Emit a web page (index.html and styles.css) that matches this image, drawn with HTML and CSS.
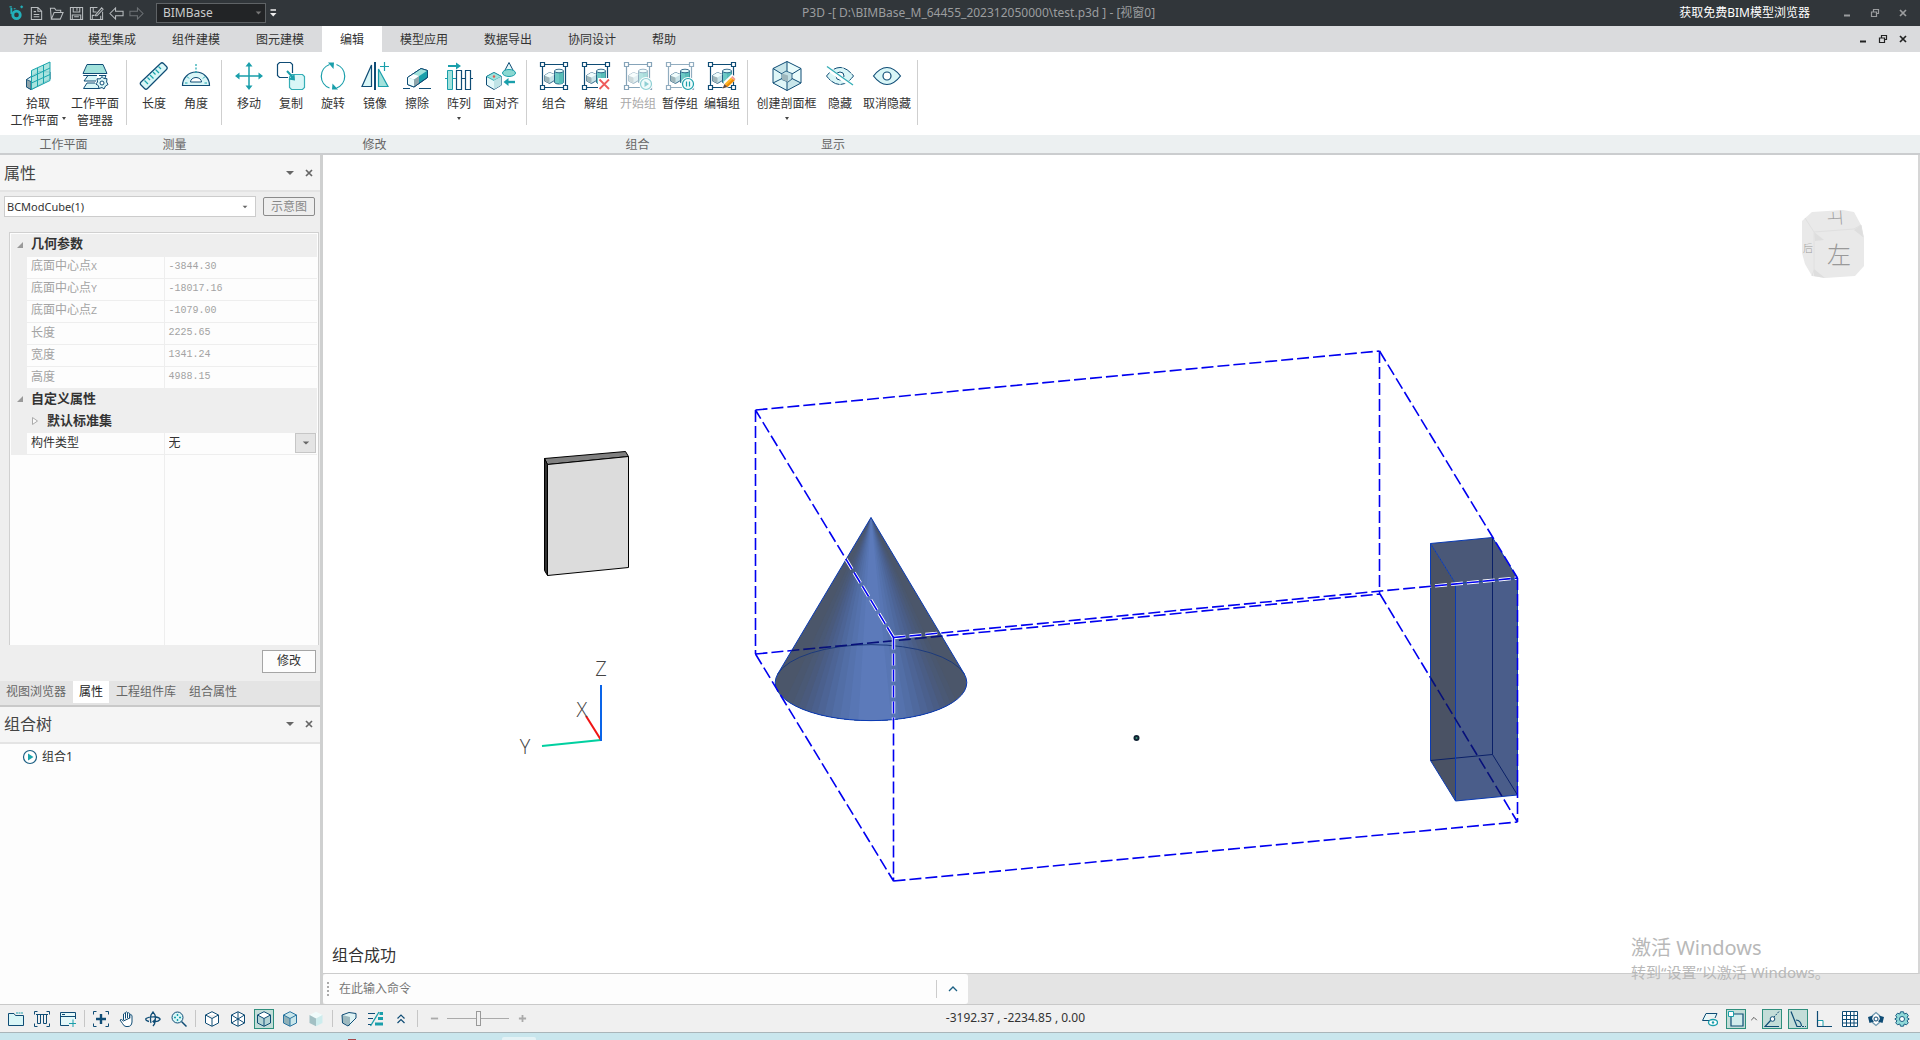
FILE: index.html
```html
<!DOCTYPE html>
<html lang="zh-CN">
<head>
<meta charset="utf-8">
<title>P3D - BIMBase</title>
<link rel="stylesheet" href="styles.css">
</head>
<body>
<svg class="defs" aria-hidden="true">
  <defs>
    <symbol id="i-frame" viewBox="0 0 32 32">
      <path d="M6 4.500H26M6 27.500H26M4.500 6V26M27.500 6V26" stroke="#0f4c75" stroke-width="1.200" fill="none"/>
      <g fill="#fff" stroke="#0f4c75" stroke-width="1.200"><path d="M2.500 2.500h4v4h-4zM25.500 2.500h4v4h-4zM2.500 25.500h4v4h-4zM25.500 25.500h4v4h-4z"/></g>
    </symbol>
    <symbol id="i-solids" viewBox="0 0 32 32">
      <path d="M16.500 11V22.500C18 24.500 24 24.500 25.500 22.500V11Z" fill="#6cc9c5" stroke="#0f4c75" stroke-width=".8"/>
      <path d="M21 11H25.500V22.500C24.500 23.800 22.500 24 21 24Z" fill="#58bdb8"/>
      <ellipse cx="21" cy="11" rx="4.500" ry="1.800" fill="#e4fbfb" stroke="#0f4c75" stroke-width=".8"/>
      <path d="M6.500 15.500 11.500 12.500 16.500 14.500V20.500L11.500 23.500 6.500 21Z" fill="#c8e3e8" stroke="#0f4c75" stroke-width=".8"/>
      <path d="M6.500 15.500 11.500 17.500V23.500L6.500 21Z" fill="#9fb6bb"/>
      <path d="M6.500 15.500 11.500 12.500 16.500 14.500 11.500 17.500Z" fill="#f0fcfc"/>
    </symbol>
    <symbol id="i-min" viewBox="0 0 10 10"><path d="M2 7.500H8" stroke="currentColor" stroke-width="2"/></symbol>
    <symbol id="i-restore" viewBox="0 0 10 10"><path d="M3.500 3.500V1.500H8.500V5.500H6.500M1.500 4H6.500V8.500H1.500Z" stroke="currentColor" stroke-width="1.200" fill="none"/></symbol>
    <symbol id="i-close" viewBox="0 0 10 10"><path d="M2 2 8 8M8 2 2 8" stroke="currentColor" stroke-width="1.700" fill="none"/></symbol>
    <symbol id="i-down" viewBox="0 0 10 10"><path d="M1 3H9L5 7Z" fill="currentColor"/></symbol>
  </defs>
</svg>

<header class="titlebar">
  <nav class="quick" aria-label="快速访问">
    <button aria-label="应用"><svg viewBox="0 0 16 16"><circle cx="8" cy="10" r="4" fill="none" stroke="#23b0ba" stroke-width="3"/><path d="M2.500 2.500V9" stroke="#23b0ba" stroke-width="2"/><path d="M.5 1.500H3M12 1.500h3M13.500 0v3M5 3.500H7" stroke="#23b0ba" stroke-width="1.200"/></svg></button>
    <button aria-label="新建"><svg viewBox="0 0 16 16"><path d="M2.500 1.500H9.500L13.500 5.500V14.500H2.500ZM9.500 1.500V5.500H13.500M5 6H7.500M5 9H11M5 11.500H11"/></svg></button>
    <button aria-label="打开"><svg viewBox="0 0 16 16"><path d="M2.500 14 1.500 2.500H6L7.500 4.500H12.500V7M2.500 14 5.500 7H15L12 14Z"/></svg></button>
    <button aria-label="保存"><svg viewBox="0 0 16 16"><path d="M1.500 1.500H14.500V14.500H1.500ZM4.500 1.500V6.500H11.500V1.500M8.500 2V5M3.500 14.500V9.500H12.500V14.500M5.500 11.500H10.500"/></svg></button>
    <button aria-label="另存为"><svg viewBox="0 0 16 16"><path d="M14.500 6V14.500H1.500V1.500H9M4.500 1.500V6.500H8M3.500 14.500V10H6M12.500 14.500V10.500M7 9.500 13.500 2 15 3.500 8.500 10.500H7Z"/></svg></button>
    <button aria-label="撤销"><svg viewBox="0 0 16 16"><path d="M1 8 7 2V5.500H15V10.500H7V14Z"/></svg></button>
    <button aria-label="重做" class="off"><svg viewBox="0 0 16 16"><path d="M15 8 9 2V5.500H1V10.500H9V14Z"/></svg></button>
  </nav>
  <div class="workspace">
    <select aria-label="工作空间"><option>BIMBase</option></select>
    <svg viewBox="0 0 10 10"><use href="#i-down"/></svg>
  </div>
  <button class="more" aria-label="自定义"><svg viewBox="0 0 10 10"><path d="M2.500 2H8" stroke="#eee" stroke-width="1.500"/><path d="M2 5H8.500L5.200 8.500Z" fill="#eee"/></svg></button>
  <h1>P3D -[ D:\BIMBase_M_64455_202312050000\test.p3d ] - [视窗0]</h1>
  <a class="promo" href="#">获取免费BIM模型浏览器</a>
  <div class="winbtns">
    <button aria-label="最小化"><svg><use href="#i-min"/></svg></button>
    <button aria-label="还原"><svg><use href="#i-restore"/></svg></button>
    <button aria-label="关闭"><svg><use href="#i-close"/></svg></button>
  </div>
</header>

<nav class="tabs">
  <button class="first">开始</button><button>模型集成</button><button>组件建模</button><button>图元建模</button><button class="on">编辑</button><button>模型应用</button><button>数据导出</button><button>协同设计</button><button>帮助</button>
  <div class="winbtns docbtns">
    <button aria-label="最小化视窗"><svg><use href="#i-min"/></svg></button>
    <button aria-label="还原视窗"><svg><use href="#i-restore"/></svg></button>
    <button aria-label="关闭视窗"><svg><use href="#i-close"/></svg></button>
  </div>
</nav>

<section class="ribbon" aria-label="编辑">
  <div class="group">
    <div class="tools wide">
      <button class="w64"><svg class="ic" viewBox="0 0 32 32"><path d="M4.500 19.500 17 11.500 28 12V19L9 29.500 4.500 27Z" fill="#dff5f6" stroke="#0f4c75"/><path d="M4.500 19.500 9 21.500V29.500L4.500 27Z" fill="#8fa5ab" stroke="#0f4c75" stroke-width=".8"/><path d="M9.500 10.500 28 2V20.500L9.500 29.500Z" fill="#9fe0da" fill-opacity=".85" stroke="#1aa5ad"/><path d="M15.500 8V26.500M21.500 5V23.500M9.500 17 28 8M9.500 23 28 14.500" stroke="#1aa5ad" fill="none"/></svg><span>拾取<br>工作平面<i class="tri"></i></span></button>
      <button class="w50"><svg class="ic" viewBox="0 0 32 32"><path d="M8 4.500H24L28 13.500H4Z" fill="#a2e2dc" stroke="#0f4c75"/><path d="M18 15.500H4.500L9 15.500 5 21H17M16 23H8L4.500 28.500H20M20 15.500H27L26 18" stroke="#0f4c75" fill="#d9f6f7"/><path d="M23 16.500 24.700 18.500 28 18.700 27.600 22 29 24.500 26.500 26 25 29 23 27.500 20 28.500 19.300 25.600 16.800 24 18.500 22 18 18.800 21.300 18.800Z" fill="#d9f6f7" stroke="#0f4c75"/><circle cx="23" cy="23" r="2" fill="#fff" stroke="#0f4c75"/></svg><span>工作平面<br>管理器</span></button>
    </div>
    <h2>工作平面</h2>
  </div>
  <div class="group">
    <div class="tools">
      <button><svg class="ic" viewBox="0 0 32 32"><path d="M22.500 3.500Q24 2 25.500 3.500L28.500 6.500Q30 8 28.500 9.500L9.500 28.500Q8 30 6.500 28.500L3 25Q1.500 23.500 3 22Z" fill="#d9f6f7" stroke="#0f4c75" stroke-width="1.200"/><path d="M6.500 20.500 10 24M9.500 17.500 12 20M12 15 15.500 18.500M15 12 17.500 14.500M17.500 9.500 21 13M20.500 6.500 23 9" stroke="#1aa5ad" stroke-width="1.200"/></svg><span>长度</span></button>
      <button><svg class="ic" viewBox="0 0 32 32"><path d="M2.500 25.500A13.500 13.500 0 0 1 29.500 25.500Z" fill="#d9f6f7" stroke="#0f4c75" stroke-width="1.200"/><path d="M10.500 22A5.500 4.500 0 0 1 21.500 22Z" fill="#fff" stroke="#0f4c75"/><path d="M16 4V14" stroke="#1aa5ad" stroke-width="1.200" stroke-dasharray="2 1.500"/><path d="M5 23H7.500M24.500 23H27M7 16.500 9 18.500M25 16.500 23 18.500" stroke="#1aa5ad"/></svg><span>角度</span></button>
    </div>
    <h2>测量</h2>
  </div>
  <div class="group">
    <div class="tools">
      <button><svg class="ic" viewBox="0 0 32 32"><path d="M16 4V28M4 16H28" stroke="#1a9fab" stroke-width="1.500"/><path d="M16 2 19.500 6.500H12.500ZM16 30 19.500 25.500H12.500ZM2 16 6.500 12.500V19.500ZM30 16 25.500 12.500V19.500Z" fill="#1a9fab"/></svg><span>移动</span></button>
      <button><svg class="ic" viewBox="0 0 32 32"><path d="M13 17.500H4.500L2.500 15.500V4.500L4.500 2.500H15.500L17.500 4.500V13" fill="#fff" stroke="#0f4c75" stroke-width="1.200"/><path d="M17 14.500H27.500L29.500 16.500V27.500L27.500 29.500H16.500L14.500 27.500V17Z" fill="#d9f6f7" stroke="#35aeb6" stroke-width="1.200"/><path d="M12 11 18 17.500" stroke="#1a9fab" stroke-width="2"/><path d="M20 20.500 19.500 14 13.500 19.500Z" fill="#1a9fab"/></svg><span>复制</span></button>
      <button><svg class="ic" viewBox="0 0 32 32"><path d="M12.500 28A12.500 12.500 0 0 1 12.500 4.500M19.500 4.500A12.500 12.500 0 0 1 19.500 28" fill="none" stroke="#1a9fab" stroke-width="1.200"/><path d="M11 2.500H17L16.500 9ZM21 29.500H15L15.500 23.500Z" fill="#1a9fab"/></svg><span>旋转</span></button>
      <button><svg class="ic" viewBox="0 0 32 32"><path d="M12.500 5V26.500H3Z" fill="#d9f6f7" stroke="#0f4c75" stroke-width="1.200"/><path d="M16 2V30" stroke="#0f4c75" stroke-width="2"/><path d="M19.500 9V26.500H29Z" fill="#a2e2dc" stroke="#1a9fab" stroke-width="1.200"/><path d="M25.500 2V11M21 6.500H30" stroke="#1a9fab" stroke-width="1.200"/></svg><span>镜像</span></button>
      <button><svg class="ic" viewBox="0 0 32 32"><path d="M6.500 17.500 20 8.500 26.500 10.500V17.500L13 27 6.500 24.500Z" fill="#1a9fab" stroke="#0f4c75"/><path d="M6.500 17.500 20 8.500 26.500 10.500 13 19.500Z" fill="#a2e2dc"/><path d="M6.500 17.500 13 19.500V27L6.500 24.500Z" fill="#eefcfc"/><path d="M13 19.500 18 16V23.500L13 27Z" fill="#8fa5ab"/><path d="M6.500 17.500 11.500 14 18 16 13 19.500Z" fill="#fff"/><path d="M6.500 17.500 20 8.500 26.500 10.500V17.500L13 27 6.500 24.500Z" fill="none" stroke="#0f4c75"/><path d="M2 28.500H9M18 28.500H30" stroke="#0f4c75" stroke-width="1.200"/></svg><span>擦除</span></button>
      <button><svg class="ic" viewBox="0 0 32 32"><path d="M5 6H14" stroke="#1a9fab" stroke-width="2"/><path d="M13 2.500 18 6 13 9.500Z" fill="#1a9fab"/><path d="M4.500 10.500H9.500V29.500H4.500Z" fill="#a2e2dc" stroke="#1a9fab"/><path d="M2 18.500H4.500M9.500 18.500H13.500" stroke="#1a9fab"/><path d="M13.500 10.500H18.500V29.500H13.500ZM22.500 10.500H27.500V29.500H22.500ZM18.500 18.500H22.500M27.500 18.500H30" fill="none" stroke="#0f4c75" stroke-width="1.200"/></svg><span>阵列</span><i class="tri below"></i></button>
      <button><svg class="ic" viewBox="0 0 32 32"><path d="M1.500 16.500 9 12.500 16.500 16.500V25L9 29.500 1.500 25Z" fill="#e4f8f9" stroke="#0f4c75"/><path d="M1.500 16.500 9 12.500 16.500 16.500 9 20.500Z" fill="#a2e2dc" stroke="#1a9fab" stroke-width=".8"/><path d="M9 20.500 16.500 16.500V25L9 29.500Z" fill="#bfe3e6"/><circle cx="9" cy="16.500" r="1.200" fill="#e05a4e"/><path d="M24 2.500 19 12H29Z" fill="#e4f8f9" stroke="#0f4c75"/><ellipse cx="24" cy="13" rx="6.500" ry="3.500" fill="#8ad8d1" stroke="#1a9fab"/><path d="M30 22H22" stroke="#1a9fab" stroke-width="2.400"/><path d="M18.500 22 23.500 18V26Z" fill="#1a9fab"/></svg><span>面对齐</span></button>
    </div>
    <h2>修改</h2>
  </div>
  <div class="group">
    <div class="tools">
      <button><svg class="ic" viewBox="0 0 32 32"><use href="#i-frame"/><use href="#i-solids"/></svg><span>组合</span></button>
      <button><svg class="ic" viewBox="0 0 32 32"><use href="#i-frame"/><use href="#i-solids"/><path d="M18 18H32V32H18Z" fill="#fff"/><path d="M19.500 19.500 29 29M29 19.500 19.500 29" stroke="#ee5c5c" stroke-width="1.800"/></svg><span>解组</span></button>
      <button disabled><svg class="ic" viewBox="0 0 32 32"><g opacity=".5"><use href="#i-frame"/><use href="#i-solids"/></g><circle cx="24" cy="24" r="7" fill="#fff"/><circle cx="24" cy="24" r="5.500" fill="#f0fbfb" stroke="#8fcfd4" stroke-width="1.200"/><path d="M22.500 21V27L27 24Z" fill="#8fcfd4"/></svg><span>开始组</span></button>
      <button><svg class="ic" viewBox="0 0 32 32"><use href="#i-frame" opacity=".45"/><use href="#i-solids"/><circle cx="24" cy="24" r="7" fill="#fff"/><circle cx="24" cy="24" r="5.500" fill="#f0fbfb" stroke="#1a9fab" stroke-width="1.200"/><path d="M22.500 21.500V26.500M25.500 21.500V26.500" stroke="#1a9fab" stroke-width="1.200"/></svg><span>暂停组</span></button>
      <button><svg class="ic" viewBox="0 0 32 32"><use href="#i-frame"/><use href="#i-solids"/><path d="M16 30 18 21.500 26 14 30.500 18 23 27Z" fill="#fff"/><path d="M18.500 24 25 17.500 28.500 20.500 21.500 27Z" fill="#ffb629"/><path d="M20 25.500 27 19 28.500 20.500 21.500 27Z" fill="#f08c00"/><path d="M25 17.500 26.500 16 29.500 19 28.500 20.500Z" fill="#f29a8f"/><path d="M18.500 24 21.500 27 16.500 28.500Z" fill="#6b4a3a"/></svg><span>编辑组</span></button>
    </div>
    <h2>组合</h2>
  </div>
  <div class="group">
    <div class="tools">
      <button class="w65"><svg class="ic" viewBox="0 0 32 32"><path d="M16 1.500 30 8.500V23L16 30.500 2 23V8.500Z" fill="#c9e6ea"/><path d="M16 1.500 30 8.500V23L16 16Z" fill="#e9fbfb"/><path d="M2 8.500V23L16 30.500V16Z" fill="#dff6f7"/><path d="M16 1.500 30 8.500V23L16 30.500 2 23V8.500ZM16 1.500V12M16 21V30.500M2 8.500 11 14M30 8.500 21 14M2 23 11 18.500M30 23 21 18.500" fill="none" stroke="#0f4c75"/><path d="M11 13.500 15 11 21 13.500V19L17 22 11 19.500Z" fill="#c2dfe4" stroke="#0f4c75" stroke-width=".8"/><path d="M11 13.500 17 15.500V22L11 19.500Z" fill="#9db6bc"/></svg><span>创建剖面框</span><i class="tri below"></i></button>
      <button><svg class="ic" viewBox="0 0 32 32"><path d="M2.500 16Q9 7.500 16 7.500T29.500 16Q23 24.500 16 24.500T2.500 16Z" fill="#d9f6f7" stroke="#0f4c75" stroke-dasharray="9 1"/><circle cx="16" cy="16" r="4" fill="#fff" stroke="#0f4c75"/><path d="M3 8 28.500 26" stroke="#fff" stroke-width="4"/><path d="M3 6.500 29 25" stroke="#35aeb6" stroke-width="1.400"/></svg><span>隐藏</span></button>
      <button class="w52"><svg class="ic" viewBox="0 0 32 32"><path d="M2.500 16Q9 7.500 16 7.500T29.500 16Q23 24.500 16 24.500T2.500 16Z" fill="#d9f6f7" stroke="#0f4c75" stroke-width="1.200"/><circle cx="16" cy="16" r="4" fill="#fff" stroke="#0f4c75" stroke-width="1.200"/></svg><span>取消隐藏</span></button>
    </div>
    <h2>显示</h2>
  </div>
  <div class="rest"></div>
</section>

<main class="work">
  <aside class="side">
    <section class="props">
      <header class="panelhead"><h2>属性</h2><button aria-label="属性菜单"><svg><use href="#i-down"/></svg></button><button aria-label="关闭属性"><svg><use href="#i-close"/></svg></button></header>
      <div class="objrow">
        <div class="combo"><select aria-label="对象"><option>BCModCube(1)</option></select><svg><use href="#i-down"/></svg></div>
        <button class="sketch">示意图</button>
      </div>
      <div class="gridbox">
        <table>
          <colgroup><col class="c1"><col class="c2"><col></colgroup>
          <tbody>
            <tr class="cat"><td><svg viewBox="0 0 8 8"><path d="M7 1V7H1Z" fill="#999"/></svg></td><th colspan="2">几何参数</th></tr>
            <tr class="ro"><td></td><th>底面中心点<b>X</b></th><td>-3844.30</td></tr>
            <tr class="ro"><td></td><th>底面中心点<b>Y</b></th><td>-18017.16</td></tr>
            <tr class="ro"><td></td><th>底面中心点<b>Z</b></th><td>-1079.00</td></tr>
            <tr class="ro"><td></td><th>长度</th><td>2225.65</td></tr>
            <tr class="ro"><td></td><th>宽度</th><td>1341.24</td></tr>
            <tr class="ro"><td></td><th>高度</th><td>4988.15</td></tr>
            <tr class="cat"><td><svg viewBox="0 0 8 8"><path d="M7 1V7H1Z" fill="#999"/></svg></td><th colspan="2">自定义属性</th></tr>
            <tr class="cat"><td></td><th colspan="2"><svg class="closed" viewBox="0 0 8 8"><path d="M1.500 .5V7.500L6.500 4Z" fill="#fafafa" stroke="#aaa"/></svg>默认标准集</th></tr>
            <tr><td></td><th><label for="ctype">构件类型</label></th><td><div class="cellsel"><select id="ctype"><option>无</option></select><span><svg><use href="#i-down"/></svg></span></div></td></tr>
            <tr class="fill"><td></td><th></th><td></td></tr>
          </tbody>
        </table>
      </div>
      <div class="apply"><button>修改</button></div>
      <nav class="bottomtabs"><button>视图浏览器</button><button class="on">属性</button><button>工程组件库</button><button>组合属性</button></nav>
    </section>
    <section class="tree">
      <header class="panelhead"><h2>组合树</h2><button aria-label="组合树菜单"><svg><use href="#i-down"/></svg></button><button aria-label="关闭组合树"><svg><use href="#i-close"/></svg></button></header>
      <ul><li><svg viewBox="0 0 16 16"><circle cx="8" cy="8" r="6.500" fill="#fff" stroke="#1b5f83" stroke-width="1.200"/><path d="M6 4.500V11.500L11.500 8Z" fill="#1aa5ad"/></svg>组合1</li></ul>
    </section>
  </aside>

  <section class="stage">
    <div class="view">
      <svg class="scene" viewBox="323 155 1595 818" preserveAspectRatio="xMidYMid meet">
        <defs>
          <clipPath id="coneclip"><path d="M871 517.500 777.700 674A95.800 38 0 1 0 964.300 674Z"/></clipPath>
          <clipPath id="solidclip"><path d="M871 517.500 777.700 674A95.800 38 0 1 0 964.300 674ZM1430.500 543.500 1492.500 537.500 1517.500 578.500V795L1455.500 801 1430.500 760.500Z"/></clipPath>
        </defs>
        <g stroke="#000" stroke-linejoin="round">
          <path d="M544.500 458.500 625.500 451.500 628.500 456.500 547.500 464.500Z" fill="#808080"/>
          <path d="M544.500 458.500 547.500 464.500V575.500L544.500 570.500Z" fill="#303030"/>
          <path d="M547.500 464.500 628.500 456.500V567.500L547.500 575.500Z" fill="#dcdcdc"/>
        </g>
        <g class="edge">
          <path d="M755.500 654 1380 594M1380 594 1517.500 822M1379.500 351V594"/>
        </g>
        <g clip-path="url(#coneclip)">
          <rect x="770" y="515" width="205" height="210" fill="#4b566a"/>
          <path d="M871 517 774 725H967Z" fill="#4a576f"/>
          <path d="M871 517 784 725H960Z" fill="#4a5975"/>
          <path d="M871 517 792 725H953Z" fill="#4a5a7c"/>
          <path d="M871 517 800 725H946Z" fill="#4a5d85"/>
          <path d="M871 517 807 725H939Z" fill="#4b608d"/>
          <path d="M871 517 814 725H932Z" fill="#4d6495"/>
          <path d="M871 517 822 725H924Z" fill="#4f699e"/>
          <path d="M871 517 830 725H916Z" fill="#526ea6"/>
          <path d="M871 517 839 725H908Z" fill="#5572ad"/>
          <path d="M871 517 848 725H900Z" fill="#5876b4"/>
          <path d="M871 517 858 725H892Z" fill="#5c7aba"/>
        </g>
        <path d="M777.700 674A95.800 38 0 0 1 964.300 674" fill="none" stroke="#1c3a7c"/>
        <path d="M871 517.500 777.700 674A95.800 38 0 1 0 964.300 674Z" fill="none" stroke="#0a3ab4"/>
        <path d="M1430.500 543.500 1492.500 537.500 1517.500 578.500 1455.500 583.500Z" fill="#4a5878"/>
        <path d="M1430.500 543.500 1455.500 583.500V801L1430.500 760.500Z" fill="#4a5264"/>
        <path d="M1455.500 583.500 1517.500 578.500V795L1455.500 801Z" fill="#4a5d8a"/>
        <path d="M1492.500 537.500V754.500L1430.500 760.500M1492.500 754.500 1517.500 795" fill="none" stroke="#0a2068"/>
        <path d="M1430.500 543.500 1492.500 537.500 1517.500 578.500V795L1455.500 801 1430.500 760.500ZM1430.500 543.500 1455.500 583.500V801M1455.500 583.500 1517.500 578.500" fill="none" stroke="#0a3ab4"/>
        <g class="edge hidden" clip-path="url(#solidclip)">
          <path d="M755.500 654 1380 594M1380 594 1517.500 822"/>
        </g>
        <g class="edge halo" clip-path="url(#solidclip)">
          <path d="M893.500 637.500 755.500 410M893.500 637.500 1517.500 578M893.500 637.500V881"/>
        </g>
        <g class="edge">
          <path d="M755.500 410 1379.500 351M1379.500 351 1517.500 578M893.500 637.500 1517.500 578M893.500 637.500 755.500 410M893.500 637.500V881M755.500 410V654M755.500 654 893.500 881M893.500 881 1517.500 822M1517.500 578V822"/>
        </g>
        <g fill="none" stroke-width="2">
          <path d="M601 740 542 746" stroke="#00d0a0"/><path d="M601 740 586 716" stroke="#f01414"/><path d="M601 741V685" stroke="#0a64e8"/>
        </g>
        <g class="axis"><text x="601" y="676">Z</text><text x="582" y="717">X</text><text x="525" y="754">Y</text></g>
        <circle cx="1136.500" cy="738" r="3" fill="#123"/><circle cx="1136.500" cy="738" r="1" fill="#3a9a7a"/>
        <g>
          <path d="M1802 221 1812 212 1843 210 1854 212 1861 225 1864 237V266L1855 276 1825 278 1812 276 1805 264 1802 253Z" fill="#e9e9e9"/>
          <path d="M1814 232 1824 240 1815 241ZM1854 230 1861 225 1863 237ZM1814 269V276L1825 278Z" fill="#dedede"/>
          <path d="M1805 218 1814 232V270L1812 276M1814 232 1854 229 1861 225M1861 225 1863 237" fill="none" stroke="#e0e0e0"/>
          <text class="face" x="1839" y="264">左</text>
          <text class="face upper" transform="rotate(-94 1835 218)" x="1835" y="224">上</text>
          <text class="face rear" x="1808" y="252">后</text>
        </g>
      </svg>
      <p class="message">组合成功</p>
    </div>
    <div class="cmdline">
      <div class="cmdbox">
        <i class="grip"></i>
        <input type="text" aria-label="命令" placeholder="在此输入命令">
        <button aria-label="展开历史"><svg viewBox="0 0 10 10"><path d="M1 7 5 3 9 7" fill="none" stroke="#1b5f83" stroke-width="1.300"/></svg></button>
      </div>
    </div>
    <div class="watermark"><p class="big">激活 Windows</p><p>转到“设置”以激活 Windows。</p></div>
  </section>
</main>

<footer class="status">
  <div class="left">
    <button aria-label="文件"><svg viewBox="0 0 16 16"><path d="M.5 14.500V2.500H6L7.500 4.500H15.500V14.500Z" fill="#d9f6f7" stroke="#0f4c75"/><path d="M8 2H15" stroke="#1a9fab" stroke-dasharray="2 .5"/></svg></button>
    <button aria-label="排列窗口"><svg viewBox="0 0 16 16"><path d="M3.500 .5H.5V3.500M12.500 .5H15.500V3.500M.5 12.500V15.500H3.500M15.500 12.500V15.500H12.500M3.500 3.500H6.500V12.500H3.500ZM9.500 3.500H12.500V12.500H9.500ZM2 3.500H14" stroke="#0f4c75" fill="none"/></svg></button>
    <button aria-label="新建窗口"><svg viewBox="0 0 16 16"><path d="M9 14.500H.5V1.500H15.500V8M.5 5.500H15.500M2 3.500H5" stroke="#0f4c75" fill="#e4f8f9"/><path d="M13 8.500V16M9 12.500H16" stroke="#1a9fab"/></svg></button>
    <hr>
    <button aria-label="全图"><svg viewBox="0 0 16 16"><path d="M3.500 .5H.5V3.500M12.500 .5H15.500V3.500M.5 12.500V15.500H3.500M15.500 12.500V15.500H12.500" stroke="#0f4c75" fill="none"/><path d="M8 3V13M3 8H13" stroke="#0f4c75" stroke-width="2.400"/></svg></button>
    <button aria-label="平移"><svg viewBox="0 0 16 16"><path d="M4.500 9V3Q5.500 1.500 6.500 3V7.500M6.500 7V1.500Q7.500 .2 8.500 1.500V7M8.500 7V2.500Q9.500 1 10.700 2.500V7.500M10.700 7V4Q12 3 13 4.500V11Q12.500 15.500 9 15.500H7Q5 15.500 3.500 12.500L1 9Q2 7.500 4.500 10Z" fill="#fff" stroke="#0f4c75"/></svg></button>
    <button aria-label="旋转视图"><svg viewBox="0 0 16 16"><path d="M6 12Q5 8 6 4L8 1 10 4Q11 8 9.500 13L8 15M4 10.500Q0 9.500 1 7.500 4 5.500 11 6 15.500 7 15 8.500 13 11 9 10.500" fill="none" stroke="#0f4c75" stroke-width="1.300"/><path d="M10 8V13L7 10.500Z" fill="#0f4c75"/></svg></button>
    <button aria-label="缩放"><svg viewBox="0 0 16 16"><circle cx="6.500" cy="6.500" r="5.500" fill="#d9f6f7" stroke="#0f4c75"/><path d="M10.500 10.500 15.500 15.500" stroke="#0f4c75" stroke-width="1.500"/><path d="M6.500 3V5M6.500 8V10M3 6.500H5M8 6.500H10" stroke="#1a9fab" stroke-width="1.400"/></svg></button>
    <hr>
    <button aria-label="线框"><svg viewBox="0 0 16 16"><path d="M8 .7 14.500 4V12L8 15.300 1.500 12V4ZM1.500 4 8 7.500 14.500 4M8 7.500V15" fill="#fff" stroke="#0f4c75"/></svg></button>
    <button aria-label="透明线框"><svg viewBox="0 0 16 16"><path d="M8 .7 14.500 4V12L8 15.300 1.500 12V4ZM1.500 4 14.500 12M14.500 4 1.500 12M8 1V15" fill="#fff" stroke="#0f4c75"/></svg></button>
    <button class="on" aria-label="隐藏线"><svg viewBox="0 0 16 16"><path d="M8 .7 14.500 4V12L8 15.300 1.500 12V4Z" fill="#b3d3d5"/><path d="M1.500 4 8 .7 14.500 4 8 7.500Z" fill="#fff"/><path d="M8 .7 14.500 4V12L8 15.300 1.500 12V4ZM1.500 4 8 7.500 14.500 4M8 7.500V15" fill="none" stroke="#0f4c75"/></svg></button>
    <button aria-label="着色线"><svg viewBox="0 0 16 16"><path d="M8 .7 14.500 4V12L8 15.300 1.500 12V4Z" fill="#c9e6ea"/><path d="M1.500 4 8 7.500V15.300L1.500 12Z" fill="#8fb0b8"/><path d="M8 .7 14.500 4V12L8 15.300 1.500 12V4ZM1.500 4 8 7.500 14.500 4M8 7.500V15" fill="none" stroke="#2a74a0"/></svg></button>
    <button aria-label="着色"><svg viewBox="0 0 16 16"><path d="M1.500 4 8 .7 14.500 4 8 7.500Z" fill="#f0fbfb"/><path d="M1.500 4 8 7.500V15.300L1.500 12Z" fill="#a2c0c4"/><path d="M14.500 4 8 7.500V15.300L14.500 12Z" fill="#cdeced"/></svg></button>
    <hr>
    <button aria-label="剖切"><svg viewBox="0 0 16 16"><path d="M1 4 8 1.500 15 2.500V7L9 15 1.500 12Z" fill="#dff3f4"/><path d="M1 4 9 6V15L1.500 12Z" fill="#9db9bf"/><path d="M1 4 8 1.500 15 2.500V7L7 15 1.500 12Z" fill="none" stroke="#0f4c75"/></svg></button>
    <button aria-label="细线"><svg viewBox="0 0 16 16"><path d="M1 2.500H8M1 7.500H6M1 13.500H4" stroke="#0f4c75"/><path d="M12 1 3.500 15" stroke="#1a9fab" stroke-width="1.300"/><path d="M12.500 2.500H16M11 7.500H16M8 13H16" stroke="#1a9fab" stroke-width="3"/></svg></button>
    <button aria-label="更多"><svg viewBox="0 0 16 16"><path d="M4.500 7.500 8 4 11.500 7.500M4.500 12 8 8.500 11.500 12" fill="none" stroke="#0f4c75" stroke-width="1.200"/></svg></button>
    <hr>
    <button class="zoomb" aria-label="缩小"><svg viewBox="0 0 10 10"><path d="M1 5H9" stroke="#aaa" stroke-width="2"/></svg></button>
    <input type="range" aria-label="缩放比例" value="50">
    <button class="zoomb" aria-label="放大"><svg viewBox="0 0 10 10"><path d="M1 5H9M5 1V9" stroke="#aaa" stroke-width="2"/></svg></button>
  </div>
  <output>-3192.37 , -2234.85 , 0.00</output>
  <div class="right">
    <button aria-label="工作面显示"><svg viewBox="0 0 16 16"><path d="M4 2.500H15L13 7M7 9.500H.5L4 2.500" fill="#e4f8f9" stroke="#0f4c75"/><ellipse cx="11" cy="11.500" rx="4.500" ry="3" fill="#fff" stroke="#1a9fab" stroke-width="1.300"/><circle cx="11" cy="11.500" r="1.200" fill="#1a9fab"/></svg></button>
    <button class="on" aria-label="捕捉"><svg viewBox="0 0 16 16"><path d="M3 3H15V15H3Z" fill="#d3ecec" stroke="#0f4c75" stroke-width="1.200"/><path d="M.5 .5H5.500V5.500H.5Z" fill="#fff" stroke="#1a9fab"/></svg></button>
    <button class="caret" aria-label="捕捉选项"><svg viewBox="0 0 10 10"><path d="M1.500 6.500 5 3 8.500 6.500" fill="none" stroke="#333"/></svg></button>
    <button class="on" aria-label="追踪"><svg viewBox="0 0 16 16"><path d="M15 .5 10 6" stroke="#0f4c75" stroke-dasharray="2 1"/><path d="M7 9 1 15.500H15" fill="none" stroke="#0f4c75" stroke-width="1.200"/><circle cx="8.500" cy="8" r="2.300" fill="#fff" stroke="#0f4c75"/></svg></button>
    <button class="on" aria-label="极轴"><svg viewBox="0 0 16 16"><path d="M1 .5 7 15.500H9M6 9Q11 9.500 11.500 15" fill="none" stroke="#0f4c75" stroke-width="1.200"/><path d="M9 15.500H16" stroke="#0f4c75" stroke-dasharray="2 1"/></svg></button>
    <button aria-label="正交"><svg viewBox="0 0 16 16"><path d="M1.500 0V15.500H16" fill="none" stroke="#0f4c75" stroke-width="1.200"/><path d="M2 9.500H7V15" fill="#fff" stroke="#1a9fab"/></svg></button>
    <button aria-label="网格"><svg viewBox="0 0 16 16"><path d="M.5 .5H15.500V15.500H.5ZM.5 4.500H15.500M.5 8.500H15.500M.5 12H15.500M4.500 .5V15.500M8.500 .5V15.500M12 .5V15.500" fill="#fff" stroke="#0f4c75"/></svg></button>
    <button aria-label="轴测"><svg viewBox="0 0 16 16"><path d="M4 5 8 1.500 12 5M4 11 8 14.500 12 11" fill="#fff" stroke="#6d97ae" stroke-width="1.300"/><path d="M0 6 5 4.500 4 8 6 10.500 1.500 12ZM16 6 11 4.500 12 8 10 10.500 14.500 12Z" fill="#0f4c75"/><circle cx="8" cy="8" r="2" fill="#fff" stroke="#0f4c75"/></svg></button>
    <button aria-label="设置"><svg viewBox="0 0 16 16"><path d="M6.500 .8H9.500L10.200 3 12.500 2.200 14.300 4.500 13 6.500 15.200 8 13 9.700 14.300 11.800 12.500 13.800 10.200 13 9.500 15.200H6.500L5.800 13 3.500 13.800 1.700 11.800 3 9.700 .8 8 3 6.500 1.700 4.500 3.500 2.200 5.800 3Z" fill="#8fd9d8" stroke="#1b5f83"/><circle cx="8" cy="8" r="2.500" fill="#fff" stroke="#1b5f83"/></svg></button>
  </div>
</footer>
<div class="taskbar"><i></i><b></b></div>
</body>
</html>
```
FILE: styles.css
```css
* { box-sizing: border-box; }

body {
  margin: 0;
  height: 100vh;
  display: flex;
  flex-direction: column;
  overflow: hidden;
  font: 12px/16px "Noto Sans", "Noto Sans CJK SC", sans-serif;
  color: #333;
  background: #eee;
}

h1, h2, p, ul { margin: 0; padding: 0; font-weight: normal; font-size: 12px; }
button, select, input { font: inherit; color: inherit; margin: 0; }
button { padding: 0; border: 0; background: none; }
select { appearance: none; border: 0; background: none; padding: 0; outline: 0; }
.defs { position: absolute; width: 0; height: 0; }

/* title bar */
.titlebar {
  height: 26px;
  flex: none;
  display: flex;
  align-items: center;
  background: #31363a;
  color: #9b9d9f;
  padding-left: 6px;
}
.quick { display: flex; }
.quick button { width: 20px; height: 20px; display: grid; place-items: center; }
.quick svg { width: 15px; height: 15px; fill: none; stroke: #b9bdc0; stroke-width: 1.1; }
.quick button:first-child svg { width: 15px; height: 16px; stroke: none; }
.quick .off { opacity: .45; }
.workspace { position: relative; width: 110px; height: 20px; margin-left: 10px; }
.workspace select { width: 100%; height: 100%; padding-left: 6px; background: #222426; border: 1px solid #5f6366; color: #c9cbcc; }
.workspace svg { position: absolute; right: 4px; top: 6px; width: 7px; height: 8px; color: #777; pointer-events: none; }
.more { width: 10px; height: 12px; margin-left: 2px; }
.more svg { width: 10px; height: 10px; display: block; }
.titlebar h1 { flex: 1; text-align: center; white-space: nowrap; }
.promo { color: #fff; text-decoration: none; margin-right: 32px; }
.winbtns { display: flex; gap: 18px; padding-right: 12px; }
.winbtns button, .winbtns svg { width: 10px; height: 10px; display: block; }

/* ribbon tabs */
.tabs { height: 26px; flex: none; display: flex; align-items: stretch; background: #dadbdd; }
.tabs > button { padding: 2px 18px 0; color: #333; }
.tabs > .first { width: 70px; }
.tabs > .on { background: #fff; }
.tabs .docbtns { margin-left: auto; align-items: center; gap: 10px; color: #222; }

/* ribbon */
.ribbon { display: flex; flex: none; height: 103px; background: #fff; border-bottom: 2px solid #cbcdcf; }
.group { display: flex; flex-direction: column; }
.tools { position: relative; flex: 1; display: flex; padding: 8px 5px 0 6px; }
.tools.wide { padding-right: 7px; }
.tools::after { content: ""; position: absolute; right: 0; top: 8px; width: 1px; height: 65px; background: #cfcfcf; }
.tools button { width: 42px; display: flex; flex-direction: column; align-items: center; white-space: nowrap; line-height: 17px; color: #333; }
.tools button:disabled { color: #aaa; }
.tools .w64 { width: 64px; }
.tools .w50 { width: 50px; }
.tools .w65 { width: 65px; }
.tools .w52 { width: 52px; }
.ic { width: 32px; height: 32px; margin-bottom: 3px; display: block; }
.tri { display: inline-block; border: 2px solid transparent; border-top: 3px solid #444; border-bottom: 0; margin-left: 3px; vertical-align: 5px; }
.tri.below { margin: 5px 0 0; }
.group h2, .rest { background: #ecf0f1; height: 18px; line-height: 20px; text-align: center; color: #666; }
.rest { flex: 1; align-self: flex-end; }

/* work area */
.work { flex: 1; display: flex; min-height: 0; }
.side { width: 323px; flex: none; display: flex; flex-direction: column; border-right: 3px solid #cfd0d0; background: #eee; }
.props { flex: 551 1 0; display: flex; flex-direction: column; border-bottom: 2px solid #c9c9c9; min-height: 0; }
.tree { flex: 298 1 0; background: #fdfdfd; }
.panelhead { height: 37px; flex: none; display: flex; align-items: center; padding: 0 6px 0 4px; background: #f5f5f5; border-bottom: 2px solid #e4e4e4; color: #666; }
.panelhead h2 { flex: 1; font-size: 16px; line-height: 20px; color: #444; }
.panelhead button { width: 10px; height: 10px; margin-left: 9px; }
.panelhead svg { width: 10px; height: 10px; display: block; }
.objrow { display: flex; gap: 7px; padding: 4px 5px 0 4px; align-items: center; }
.combo { position: relative; flex: 1; height: 21px; background: #fff; border: 1px solid #ccc; }
.combo select { width: 100%; height: 100%; padding-left: 2px; font-size: 11px; }
.combo svg { position: absolute; right: 7px; top: 6px; width: 6px; height: 8px; color: #666; pointer-events: none; }
.sketch { width: 52px; height: 19px; border: 1px solid #8b8b8b; border-radius: 2px; color: #888; line-height: 16px; }
.gridbox { flex: 1; margin: 15px 1px 0 9px; border: 1px solid #d0d0d0; border-bottom: 0; background: #fdfdfd; padding: 1px 1px 0; min-height: 0; }
.gridbox table { width: 100%; height: 100%; border-collapse: collapse; table-layout: fixed; }
.gridbox .c1 { width: 16px; }
.gridbox .c2 { width: 137px; }
.gridbox tr { height: 22px; }
.gridbox td, .gridbox th { padding: 0 0 0 4px; height: 22px; line-height: 16px; font-weight: normal; text-align: left; border-bottom: 1px solid #eee; }
.gridbox tr > td:first-child { background: #eee; padding-left: 5px; }
.gridbox tr > th + td { border-left: 1px solid #eee; }
.gridbox td svg, .gridbox .closed { width: 8px; height: 8px; }
.cat td, .cat th { background: #eee; }
.gridbox .cat th { font-weight: bold; font-size: 13px; padding-bottom: 3px; }
.closed { margin-right: 8px; }
.gridbox .ro { color: #a3a3a3; }
.ro td { font-family: "Liberation Mono", monospace; font-size: 10px; }
.ro b { font: 10px/16px "Liberation Mono", monospace; }
.gridbox .fill { height: auto; }
.gridbox .fill td, .gridbox .fill th, .gridbox .fill > td:first-child { background: #fdfdfd; height: auto; border-bottom: 0; }
.cellsel { display: flex; }
.cellsel select { flex: 1; height: 20px; }
.cellsel span { width: 21px; height: 20px; display: grid; place-items: center; background: #e4e4e4; border: 1px solid #c6c6c6; margin-right: 1px; }
.cellsel svg { width: 5px; height: 8px; color: #666; }
.apply { display: flex; justify-content: flex-end; padding: 5px 4px 8px; }
.apply button { width: 54px; height: 23px; background: #fdfdfd; border: 1px solid #a5a5a5; }
.bottomtabs { display: flex; height: 24px; flex: none; background: #e4e4e4; padding-bottom: 2px; color: #666; }
.bottomtabs button { padding: 0 6px; margin-right: 1px; }
.bottomtabs .on { background: #fff; color: #222; }
.tree ul { list-style: none; padding: 5px 0 0 22px; }
.tree li { display: flex; align-items: center; gap: 4px; }
.tree li svg { width: 16px; height: 16px; }

/* viewport */
.stage { position: relative; flex: 1; min-width: 0; display: flex; flex-direction: column; background: #e4e4e4; }
.view { position: relative; flex: 1; min-height: 0; background: #fff; border-right: 2px solid #d6d6d6; border-bottom: 1px solid #ccc; }
.scene { display: block; width: 100%; height: 100%; position: absolute; inset: 0; }
.edge { fill: none; stroke: #0000f0; stroke-width: 1.6; stroke-dasharray: 12 4; }
.edge.hidden { stroke: #07107a; }
.edge.halo { stroke: #fff; stroke-width: 3.4; }
.axis { font: 300 20px "Open Sans", sans-serif; fill: #444; text-anchor: middle; }
.face { font: 24px "Noto Sans CJK SC", sans-serif; fill: #999; text-anchor: middle; font-weight: 300; }
.upper { font-size: 16px; }
.rear { font-size: 10px; }
.message { position: absolute; left: 9px; bottom: 8px; font-size: 16px; line-height: 20px; }
.cmdline { height: 30px; flex: none; }
.cmdbox { display: flex; align-items: center; height: 30px; width: 645px; max-width: 100%; background: #fdfdfd; border-radius: 3px; padding-left: 4px; }
.grip { width: 2px; height: 14px; background: repeating-linear-gradient(#aaa 0 2px, transparent 2px 4px); }
.cmdbox input { flex: 1; border: 0; outline: 0; background: none; padding: 0 0 0 10px; }
.cmdbox input::placeholder { color: #777; opacity: 1; }
.cmdbox button { width: 32px; height: 18px; border-left: 1px solid #ccc; }
.cmdbox svg { width: 10px; height: 10px; display: block; margin: 0 auto; }
.watermark { position: absolute; right: 90px; bottom: 22px; width: 199px; color: #b8b8b8; white-space: nowrap; pointer-events: none; }
.watermark p { font-size: 15px; line-height: 20px; }
.watermark .big { font-size: 20px; line-height: 28px; }

/* status bar */
.status { height: 29px; flex: none; display: grid; grid-template-columns: minmax(540px, 49%) 1fr auto; align-items: center; background: #f0f0f0; border-top: 1px solid #c9c9c9; border-bottom: 1px solid #a9b5b9; color: #333; }
.status .left, .status .right { display: flex; align-items: center; }
.status .left { padding-left: 3px; }
.status .right { padding-right: 8px; gap: 6px; }
.status button { width: 20px; height: 20px; display: grid; place-items: center; }
.status .left button { margin: 0 3px; }
.status button svg { width: 16px; height: 16px; }
.status .on { background: #c3ddd8; border: 1px solid #2f8f7d; }
.status hr { width: 1px; height: 17px; border: 0; background: #c6c6c6; margin: 0 3px; }
.status .caret { width: 10px; margin: 0 -3px; }
.status .caret svg { width: 8px; height: 8px; }
.status .left .zoomb { width: 10px; margin: 0 8px; }
.status .zoomb svg { width: 9px; height: 9px; }
.status output { padding-left: 5px; line-height: 16px; padding-bottom: 2px; }
.status input { appearance: none; width: 62px; height: 16px; background: linear-gradient(#aaa, #aaa) center / 100% 1px no-repeat; }
.status input::-webkit-slider-thumb { appearance: none; width: 5px; height: 15px; background: #f0f0f0; border: 1px solid #999; }

/* desktop strip */
.taskbar { height: 7px; flex: none; background: #c9e6ed; display: flex; align-items: flex-end; }
.taskbar i { width: 8px; height: 1px; margin-left: 348px; background: #a8484a; }
.taskbar b { width: 34px; height: 3px; margin-left: 146px; background: #e4f2f5; border-radius: 2px 2px 0 0; }
```
